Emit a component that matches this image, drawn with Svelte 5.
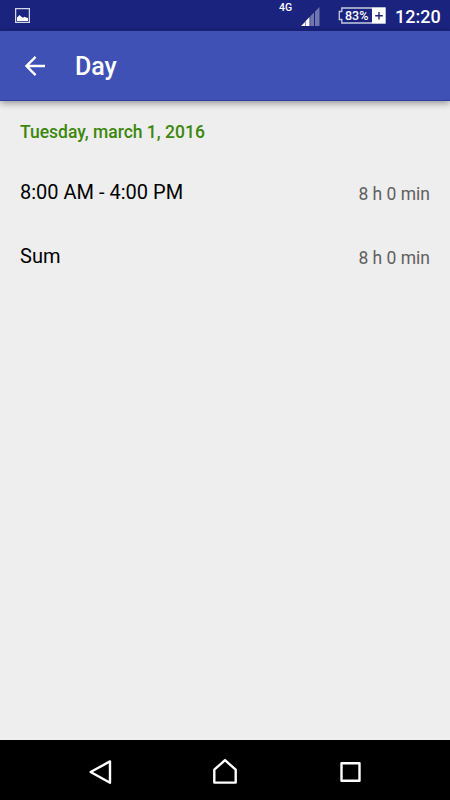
<script>
  const entries = [
    { label: '8:00 AM - 4:00 PM', duration: '8 h 0 min' },
    { label: 'Sum', duration: '8 h 0 min' }
  ];
</script>

<div class="screen">
  <header class="status">
    <svg class="photo" width="15" height="15" viewBox="0 0 15 15">
      <rect x=".6" y=".6" width="13.8" height="13.8" fill="none" stroke="#d3d5e8" stroke-width="1.3" />
      <path d="M2 13V9.5L3.2 8.5L4.5 7L6.3 8.7L8 9.7L9.5 8.7L11 9.6L13 10V13Z" fill="#fff" />
    </svg>
    <span class="network">4G</span>
    <svg class="signal" width="19" height="19" viewBox="0 0 19 19">
      <path d="M0 19L4 15V19ZM4.5 19V14.3L8.5 10V19Z" fill="#fff" />
      <path d="M9.2 19V9.2L13 5.5V19ZM14 19V4.5L18.5 0V19Z" fill="#7076ae" />
    </svg>
    <div class="battery">
      <svg width="48" height="17" viewBox="0 0 48 17">
        <path d="M34 1H3.8V4.5H1.3V12.5H3.8V16H34" fill="none" stroke="#c8cbe4" stroke-width="1.3" />
        <rect x="34" y=".3" width="13.7" height="16.4" fill="#fff" />
        <path d="M37.2 8.7H44.8M41 4.9V12.5" stroke="#1a237e" stroke-width="1.4" />
      </svg>
      <span>83%</span>
    </div>
    <time>12:20</time>
  </header>

  <header class="toolbar">
    <svg width="20" height="20" viewBox="0 0 20 20" fill="none" stroke="#fff" stroke-width="2.4">
      <path d="M20 10H2M10.6 .9L1.5 10L10.6 19.1" />
    </svg>
    <h1>Day</h1>
  </header>

  <main>
    <h2><span>Tuesday, march 1, 2016</span></h2>
    {#each entries as entry}
      <div class="row">
        <span class="label">{entry.label}</span>
        <span class="duration">{entry.duration}</span>
      </div>
    {/each}
  </main>

  <nav>
    <svg width="125" height="60" viewBox="0 0 125 60">
      <path d="M72 21.4V42.8L52.6 32Z" />
    </svg>
    <svg width="125" height="60" viewBox="0 0 125 60">
      <path d="M51.8 42.6V29.7L62.5 20.2L73.2 29.7V42.6Z" transform="translate(-0.5 0)" />
    </svg>
    <svg width="125" height="60" viewBox="0 0 125 60">
      <path d="M53.5 23.2H71.5V40.8H53.5Z" />
    </svg>
  </nav>
</div>

<style>
  :global(body) {
    margin: 0;
  }
  .screen {
    width: 450px;
    height: 800px;
    display: flex;
    flex-direction: column;
    overflow: hidden;
    background: #eee;
    color: #000;
    font-family: Roboto, sans-serif;
  }
  svg {
    display: block;
    flex: none;
  }
  .status {
    height: 31px;
    flex: none;
    display: flex;
    align-items: flex-start;
    box-sizing: border-box;
    padding-left: 15px;
    background: #1a237e;
    color: #fff;
  }
  .photo {
    margin-top: 8px;
  }
  .network {
    width: 22px;
    margin: 1px 0 0 249px;
    font-size: 10.5px;
    line-height: 13px;
    font-weight: 500;
  }
  .signal {
    margin-top: 7px;
  }
  .battery {
    position: relative;
    margin: 7px 0 0 18px;
  }
  .battery span {
    position: absolute;
    left: 7px;
    top: 0;
    font-size: 12.5px;
    line-height: 17px;
    font-weight: 500;
  }
  time {
    margin: 6px 0 0 9px;
    font-size: 18px;
    line-height: 22px;
    font-weight: 500;
  }
  .toolbar {
    height: 70px;
    flex: none;
    display: flex;
    align-items: center;
    box-sizing: border-box;
    padding-left: 25px;
    position: relative;
    border-bottom: 1px solid #303f9f;
    background: #3f51b5;
    box-shadow: 0 2px 7px rgba(0, 0, 0, .4);
    color: #fff;
  }
  h1 {
    margin: 3px 0 0 30px;
    font-size: 25px;
    line-height: 30px;
    font-weight: 500;
  }
  main {
    flex: 1;
    padding: 0 20px;
  }
  h2 {
    margin: 0;
    height: 59px;
    font-size: 17.5px;
    line-height: 62px;
    font-weight: 500;
    color: #3c870c;
  }
  .row {
    height: 64px;
    display: flex;
    align-items: center;
    justify-content: space-between;
  }
  .label {
    font-size: 20px;
    line-height: 24px;
  }
  .duration {
    margin-top: 3px;
    font-size: 17.5px;
    line-height: 22px;
    color: #606060;
  }
  nav {
    height: 60px;
    flex: none;
    display: flex;
    justify-content: center;
    background: #000;
  }
  nav svg {
    fill: none;
    stroke: #fff;
    stroke-width: 2.4;
    stroke-linejoin: round;
  }
</style>
